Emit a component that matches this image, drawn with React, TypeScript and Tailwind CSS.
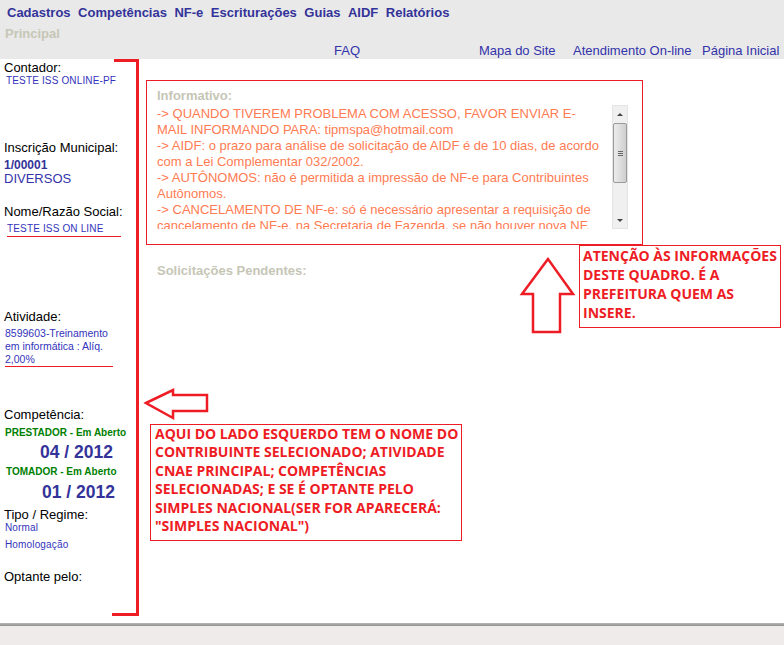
import React from "react";

const menu = ["Cadastros", "Competências", "NF-e", "Escriturações", "Guias", "AIDF", "Relatórios"];

const infoLines = [
  "-> QUANDO TIVEREM PROBLEMA COM ACESSO, FAVOR ENVIAR E-",
  "MAIL INFORMANDO PARA: tipmspa@hotmail.com",
  "-> AIDF: o prazo para análise de solicitação de AIDF é de 10 dias, de acordo",
  "com a Lei Complementar 032/2002.",
  "-> AUTÔNOMOS: não é permitida a impressão de NF-e para Contribuintes",
  "Autônomos.",
  "-> CANCELAMENTO DE NF-e: só é necessário apresentar a requisição de",
  "cancelamento de NF-e, na Secretaria de Fazenda, se não houver nova NF.",
];

export default function App() {
  return (
    <div className="relative w-[784px] h-[645px] overflow-hidden bg-white" style={{ fontFamily: '"Liberation Sans", Arial, sans-serif' }}>
      {/* header */}
      <div className="h-[59px] bg-[#e9e9e9] relative">
        <div className="flex gap-[7.5px] pl-[7px] pt-[5px] text-[13px] leading-[16px] font-bold text-[#333399]">
          {menu.map((m) => (
            <span key={m}>{m}</span>
          ))}
        </div>
        <div className="pl-[5px] pt-[5px] text-[13px] leading-[16px] font-bold text-[#c6c6b6]">Principal</div>
        <div className="flex text-[13px] leading-[14px] text-[#3333aa] pt-[2px] whitespace-nowrap">
          <span className="ml-[334px] w-[145px]">FAQ</span>
          <span className="w-[94px]">Mapa do Site</span>
          <span className="w-[129px]">Atendimento On-line</span>
          <span>Página Inicial</span>
        </div>
      </div>

      {/* body */}
      <div className="flex h-[564px]">
        <div className="w-[140px] shrink-0 relative text-[13px] leading-[14px] text-black">
          <div className="pl-[4px] mt-[2px]">Contador:</div>
          <div className="pl-[6px] text-[10px] leading-[12px] tracking-[0.15px] text-[#3333bb]">TESTE ISS ONLINE-PF</div>
          <div className="pl-[4px] mt-[54px]">Inscrição Municipal:</div>
          <div className="pl-[4px] mt-[3px] text-[12px] font-bold text-[#333399]">1/00001</div>
          <div className="pl-[4px] text-[#3333aa]">DIVERSOS</div>
          <div className="pl-[4px] mt-[19px]">Nome/Razão Social:</div>
          <div className="ml-[7px] mt-[4px] w-[114px] border-b border-[#ee1c24] text-[10px] leading-[12px] tracking-[0.15px] text-[#3333bb] pb-[1px]">TESTE ISS ON LINE</div>
          <div className="pl-[4px] mt-[73px]">Atividade:</div>
          <div className="ml-[5px] mt-[3px] w-[108px] border-b border-[#ee1c24] text-[10.5px] leading-[13px] text-[#3333bb]">
            8599603-Treinamento em informática : Alíq. 2,00%
          </div>
          <div className="pl-[4px] mt-[41px]">Competência:</div>
          <div className="pl-[5px] mt-[5px] text-[10px] leading-[12px] font-bold text-[#008000]">PRESTADOR - Em Aberto</div>
          <div className="pl-[40px] mt-[4px] text-[17.5px] leading-[18px] font-bold text-[#333399]">04 / 2012</div>
          <div className="pl-[6px] mt-[5px] text-[10px] leading-[12px] font-bold text-[#008000]">TOMADOR - Em Aberto</div>
          <div className="pl-[42px] mt-[5px] text-[17.5px] leading-[18px] font-bold text-[#333399]">01 / 2012</div>
          <div className="pl-[4px] mt-[7px]">Tipo / Regime:</div>
          <div className="pl-[5px] text-[10px] leading-[12px] tracking-[0.15px] text-[#3333bb]">Normal</div>
          <div className="pl-[5px] mt-[5px] text-[10px] leading-[12px] tracking-[0.15px] text-[#3333bb]">Homologação</div>
          <div className="pl-[4px] mt-[19px]">Optante pelo:</div>
        </div>

        <div className="flex-1 pl-[6px] pt-[21px]">
          <div className="w-[497px] h-[165px] border border-[#ee1c24] pl-[10px] pt-[7px]">
            <div className="text-[13px] leading-[15px] font-bold text-[#c6c6b6]">Informativo:</div>
            <div className="flex mt-[2px] h-[124px]">
              <div className="w-[455px] overflow-hidden pt-[1px] text-[13px] leading-[16px] text-[#ff7b52] whitespace-nowrap">
                {infoLines.map((l, i) => (
                  <div key={i}>{l}</div>
                ))}
              </div>
              <div className="w-[16px] h-[124px] bg-[#f0f0f0] border border-[#e4e4e4] flex flex-col items-center">
                <div className="h-[17px] flex items-center justify-center">
                  <div className="w-0 h-0 border-l-[3px] border-r-[3px] border-b-[3px] border-l-transparent border-r-transparent border-b-[#444]" />
                </div>
                <div className="w-[14px] h-[60px] rounded-[2px] border border-[#9a9a9a] bg-gradient-to-r from-[#ececec] to-[#cfcfcf] flex flex-col items-center justify-center gap-[1px]">
                  <div className="w-[5px] h-px bg-[#666]" />
                  <div className="w-[5px] h-px bg-[#666]" />
                  <div className="w-[5px] h-px bg-[#666]" />
                </div>
                <div className="flex-1" />
                <div className="h-[15px] flex items-center justify-center">
                  <div className="w-0 h-0 border-l-[3px] border-r-[3px] border-t-[3px] border-l-transparent border-r-transparent border-t-[#444]" />
                </div>
              </div>
            </div>
          </div>
          <div className="pl-[11px] mt-[18px] text-[13px] leading-[15px] font-bold text-[#c6c6b6]">Solicitações Pendentes:</div>
        </div>
      </div>

      {/* footer */}
      <div className="h-[3px] bg-gradient-to-b from-[#b8b8b8] to-[#909090]" />
      <div className="h-[19px] bg-[#efebea]" />

      {/* annotation drawings */}
      <svg className="absolute left-0 top-0 pointer-events-none" width="784" height="645">
        <polyline points="114,60.5 137.5,60.5 137.5,614.5 112,614.5" fill="none" stroke="#ee1c24" strokeWidth="3" />
        <polygon points="548,259 522,294 533,294 533,332 560,332 560,294 573,294" fill="none" stroke="#ee1c24" strokeWidth="2.5" strokeLinejoin="miter" />
        <polygon points="146,403 173,390 173,395 207,395 207,411 173,411 173,418" fill="none" stroke="#ee1c24" strokeWidth="2.5" />
      </svg>

      <div className="absolute left-[579px] top-[245px] w-[202px] h-[83px] border-[1.5px] border-[#ee1c24] pl-[3px] text-[14px] leading-[19px] font-bold text-[#ee1c24]" style={{ fontFamily: '"Open Sans", sans-serif' }}>
        ATENÇÃO ÀS INFORMAÇÕES DESTE QUADRO. É A PREFEITURA QUEM AS INSERE.
      </div>

      <div className="absolute left-[150px] top-[424px] w-[312px] h-[117px] border-[1.5px] border-[#ee1c24] pl-[4px] text-[14px] leading-[18.4px] font-bold text-[#ee1c24]" style={{ fontFamily: '"Open Sans", sans-serif' }}>
        AQUI DO LADO ESQUERDO TEM O NOME DO CONTRIBUINTE SELECIONADO; ATIVIDADE CNAE PRINCIPAL; COMPETÊNCIAS SELECIONADAS; E SE É OPTANTE PELO SIMPLES NACIONAL(SER FOR APARECERÁ: "SIMPLES NACIONAL")
      </div>
    </div>
  );
}
